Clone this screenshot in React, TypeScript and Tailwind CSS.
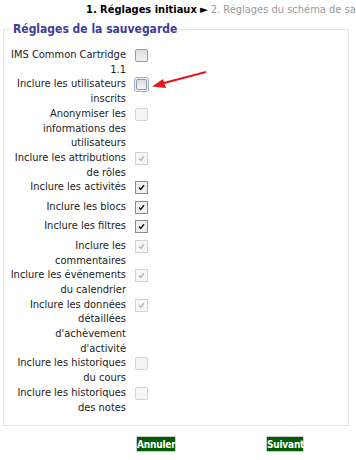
import React from 'react'

type Box = 'off' | 'on' | 'dis' | 'dison' | 'focus'

const rows: { lines: string[]; box: Box }[] = [
  { lines: ['IMS Common Cartridge', '1.1'], box: 'off' },
  { lines: ['Inclure les utilisateurs', 'inscrits'], box: 'focus' },
  { lines: ['Anonymiser les', 'informations des', 'utilisateurs'], box: 'dis' },
  { lines: ['Inclure les attributions', 'de rôles'], box: 'dison' },
  { lines: ['Inclure les activités'], box: 'on' },
  { lines: ['Inclure les blocs'], box: 'on' },
  { lines: ['Inclure les filtres'], box: 'on' },
  { lines: ['Inclure les', 'commentaires'], box: 'dison' },
  { lines: ['Inclure les événements', 'du calendrier'], box: 'dison' },
  { lines: ['Inclure les données', 'détaillées', "d'achèvement", "d'activité"], box: 'dison' },
  { lines: ['Inclure les historiques', 'du cours'], box: 'dis' },
  { lines: ['Inclure les historiques', 'des notes'], box: 'dis' },
]

function Check({ kind }: { kind: Box }) {
  const checked = kind === 'on' || kind === 'dison'
  if (checked) {
    const dark = kind === 'on'
    return (
      <div
        className={
          dark
            ? 'w-[13px] h-[13px] mt-[1px] border border-[#8a8a8a] bg-[#efefef] flex items-center justify-center'
            : 'w-[13px] h-[13px] mt-[1px] border border-[#d2d2d2] bg-[#f7f7f7] flex items-center justify-center'
        }
      >
        <svg width="9" height="9" viewBox="0 0 9 9">
          <path d="M2 4.6 L3.7 6.4 L7 2.2" fill="none" stroke={dark ? '#1a1a1a' : '#b8b8b8'} strokeWidth="1.5" />
        </svg>
      </div>
    )
  }
  if (kind === 'focus') {
    return (
      <div className="w-[15px] h-[15px] -ml-[1px] mt-0 rounded-[3px] border border-[#8fb4ef] bg-[#e9edf5] p-[1px]">
        <div className="w-full h-full rounded-[2px] border border-[#9b9b9b] bg-gradient-to-b from-[#dedede] to-[#f3f3f3]" />
      </div>
    )
  }
  if (kind === 'dis') {
    return <div className="w-[13px] h-[13px] mt-[1px] rounded-[2px] border border-[#d4d4d4] bg-[#f5f5f5]" />
  }
  return (
    <div className="w-[13px] h-[13px] mt-[1px] rounded-[2px] border border-[#9b9b9b] bg-gradient-to-b from-[#dedede] to-[#f3f3f3]" />
  )
}

export default function App() {
  return (
    <div
      className="relative w-[356px] h-[460px] overflow-hidden bg-white text-[#222] text-[11px]"
      style={{ fontFamily: '"DejaVu Sans Condensed", "DejaVu Sans", sans-serif' }}
    >
      <div className="pl-[86px] pt-[3px] h-[17px] leading-[14px] whitespace-nowrap">
        <span className="font-bold text-black">1. Réglages initiaux</span>
        <span className="text-black"> ► </span>
        <span className="text-[#999]">2. Réglages du schéma de sauvegarde</span>
      </div>

      <fieldset className="ml-[3px] mt-[5px] w-[346px] border border-[#e2e2e2] pt-[12px] pb-[10px]">
        <legend className="ml-[6px] px-[3px] text-[12px] font-bold text-[#3d3d97] leading-[14px]">
          Réglages de la sauvegarde
        </legend>
        <div className="flex flex-col">
          {rows.map((r, i) => (
            <div key={i} className="flex items-start min-h-[19.5px]">
              <div className="w-[122px] text-right leading-[14.7px] whitespace-nowrap">
                {r.lines.map((l, j) => (
                  <div key={j}>{l}</div>
                ))}
              </div>
              <div className="ml-[9px]">
                <Check kind={r.box} />
              </div>
            </div>
          ))}
        </div>
      </fieldset>

      <div className="flex mt-[10px]">
        <button className="ml-[136px] h-[16px] w-[40px] border border-[#c9c9c9] bg-[#005c00] text-white font-bold text-[10px] leading-[13px] px-0 tracking-[-0.2px]">
          Annuler
        </button>
        <button className="ml-[90px] h-[16px] w-[38px] border border-[#c9c9c9] bg-[#005c00] text-white font-bold text-[10px] leading-[13px] px-0 tracking-[-0.2px]">
          Suivant
        </button>
      </div>

      <svg className="absolute left-0 top-0 pointer-events-none" width="356" height="460">
        <line x1="206" y1="72" x2="162" y2="83.5" stroke="#e8141c" strokeWidth="2" />
        <polygon points="152,86.5 163,79 166,88" fill="#e8141c" />
      </svg>
    </div>
  )
}
